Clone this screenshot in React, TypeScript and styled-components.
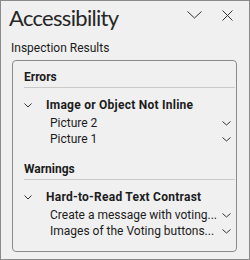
import React from "react";
import styled, { createGlobalStyle } from "styled-components";

const Global = createGlobalStyle`
  html, body { margin: 0; padding: 0; background: #f0f0f0; }
  body { font-family: Roboto, "Noto Sans", sans-serif; color: #1c1c1c; }
`;

const Panel = styled.div`
  box-sizing: border-box;
  width: 250px;
  height: 260px;
  border: 1px solid #8a8a8a;
  background: #f0f0f0;
  display: flex;
  flex-direction: column;
`;

const Header = styled.div`
  display: flex;
  align-items: flex-start;
  height: 30px;
  padding: 2px 10px 0 8px;
`;

const Title = styled.h1`
  margin: 0;
  flex: 1;
  font-family: Lato, Roboto, sans-serif;
  font-size: 22px;
  line-height: 30px;
  font-weight: 400;
  letter-spacing: -0.7px;
  color: #262626;
`;

const IconRow = styled.div`
  display: flex;
  gap: 9px;
`;

const IconButton = styled.button`
  border: 0;
  background: transparent;
  padding: 0;
  width: 24px;
  height: 24px;
  display: flex;
  align-items: center;
  justify-content: center;
`;

const Subtitle = styled.div`
  font-size: 12px;
  line-height: 16px;
  padding-left: 10px;
  margin-top: 7px;
`;

const ResultsBox = styled.div`
  flex: 1;
  margin: 4px 12px 7px 11px;
  border: 1px solid #8a8a8a;
  border-radius: 4px;
  padding: 8px 1px 0 11px;
`;

const Section = styled.section`
  & + & {
    margin-top: 14px;
  }
`;

const SectionHeader = styled.div`
  font-size: 12px;
  line-height: 16px;
  font-weight: 700;
  padding-bottom: 2px;
  border-bottom: 1px solid #c9c9c9;
  margin-bottom: 9px;
`;

const GroupRow = styled.div`
  display: flex;
  align-items: center;
  height: 16px;
  line-height: 16px;
  font-size: 12px;
  font-weight: 700;
  letter-spacing: 0.25px;
  margin-bottom: 2px;
`;

const GroupChevron = styled.span`
  width: 22px;
  display: flex;
  align-items: center;
  padding-top: 1px;
`;

const ItemRow = styled.div`
  display: flex;
  align-items: center;
  height: 16px;
  line-height: 16px;
  padding-left: 26px;
  padding-right: 4px;
  font-size: 12px;
`;

const ItemText = styled.span`
  flex: 1;
  white-space: nowrap;
  overflow: hidden;
  text-overflow: ellipsis;
`;

const Chevron = ({ w, h }: { w: number; h: number }) => (
  <svg width={w} height={h + 1} viewBox={`0 0 ${w} ${h + 1}`} fill="none">
    <path d={`M0.5 0.5 L${w / 2} ${h} L${w - 0.5} 0.5`} stroke="#333" strokeWidth="1" />
  </svg>
);

const CloseIcon = () => (
  <svg width="11" height="11" viewBox="0 0 11 11" fill="none">
    <path d="M0.5 0.5 L10.5 10.5 M10.5 0.5 L0.5 10.5" stroke="#333" strokeWidth="1" />
  </svg>
);

const sections = [
  {
    name: "Errors",
    group: "Image or Object Not Inline",
    items: ["Picture 2", "Picture 1"],
  },
  {
    name: "Warnings",
    group: "Hard-to-Read Text Contrast",
    items: ["Create a message with voting...", "Images of the Voting buttons..."],
  },
];

export default function App() {
  return (
    <>
      <Global />
      <Panel>
        <Header>
          <Title>Accessibility</Title>
          <IconRow>
            <IconButton aria-label="Options">
              <Chevron w={15} h={7} />
            </IconButton>
            <IconButton aria-label="Close">
              <CloseIcon />
            </IconButton>
          </IconRow>
        </Header>
        <Subtitle>Inspection Results</Subtitle>
        <ResultsBox>
          {sections.map((s) => (
            <Section key={s.name}>
              <SectionHeader>{s.name}</SectionHeader>
              <GroupRow>
                <GroupChevron>
                  <Chevron w={8} h={4} />
                </GroupChevron>
                {s.group}
              </GroupRow>
              {s.items.map((it) => (
                <ItemRow key={it}>
                  <ItemText>{it}</ItemText>
                  <Chevron w={9} h={4} />
                </ItemRow>
              ))}
            </Section>
          ))}
        </ResultsBox>
      </Panel>
    </>
  );
}
